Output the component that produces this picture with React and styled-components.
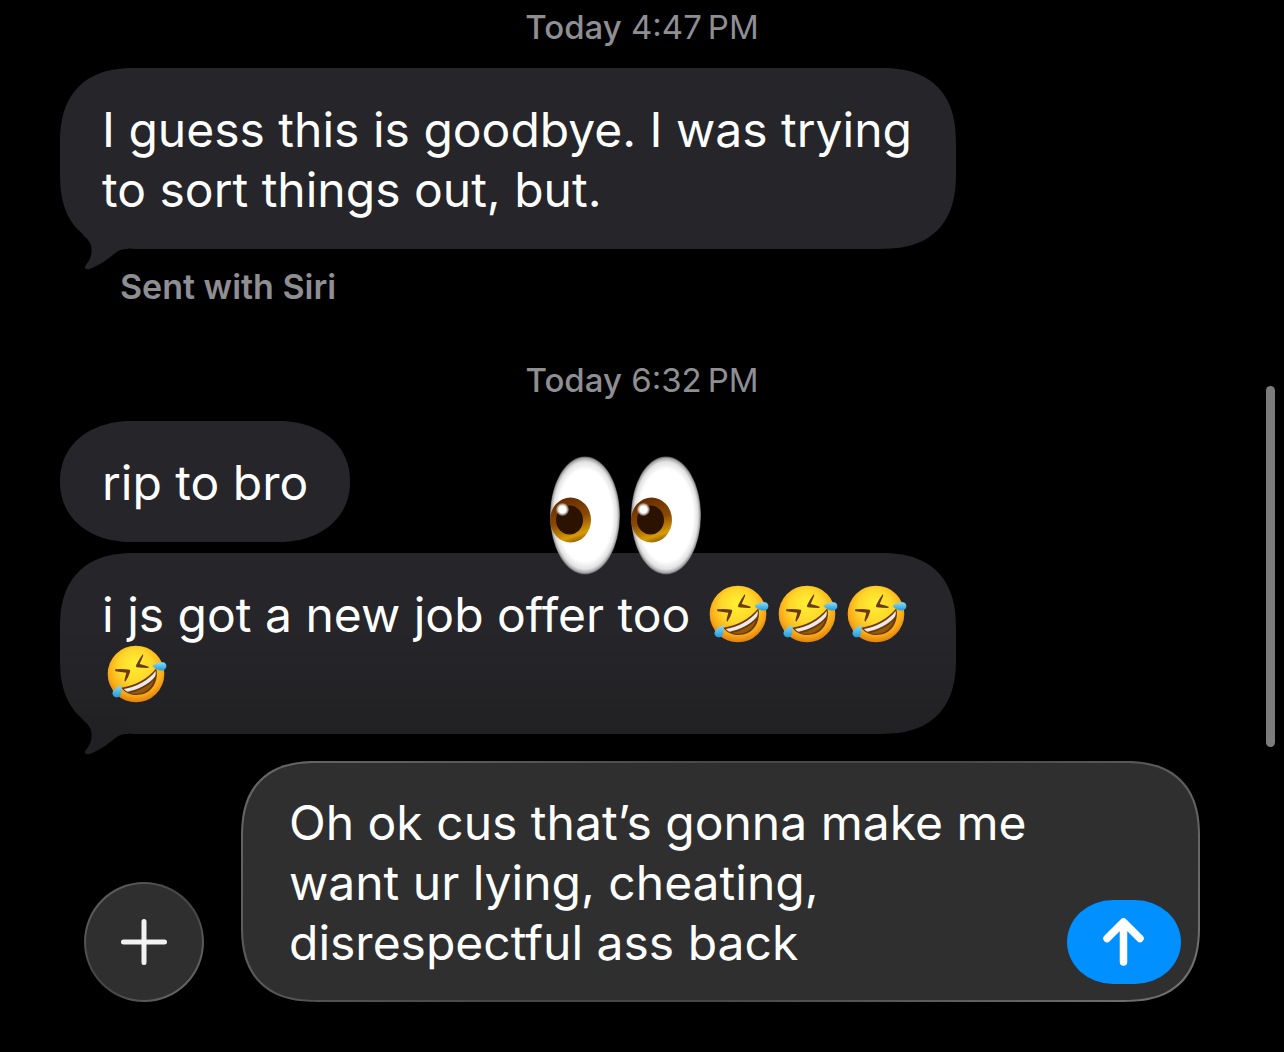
import React, { useState } from "react";
import styled, { createGlobalStyle } from "styled-components";

const GlobalStyle = createGlobalStyle`
  * {
    box-sizing: border-box;
  }
  body {
    margin: 0;
    background: #000;
    font-family: Inter, "Noto Sans", sans-serif;
  }
`;

const Screen = styled.div`
  position: relative;
  min-height: 100vh;
  display: flex;
  flex-direction: column;
  justify-content: space-between;
  background: #000;
  overflow: hidden;
`;

const Thread = styled.main`
  display: flex;
  flex-direction: column;
  padding: 7px 60px 0;
`;

const Timestamp = styled.time`
  font-size: 33px;
  line-height: 40px;
  color: #8e8e93;
  text-align: center;
  margin-bottom: 21px;
  b {
    font-weight: 500;
  }
`;

const Group = styled.section`
  display: flex;
  flex-direction: column;
  align-items: flex-start;
  gap: 11px;
`;

const Bubble = styled.p`
  position: relative;
  margin: 0;
  max-width: 77%;
  padding: 32px 42px 29px;
  font-size: 48px;
  line-height: 60px;
  color: #fff;
  background: ${(props) => (props.$faded ? "linear-gradient(#262529 40%, #212124)" : "#262529")};
  border-radius: 60px;
  @supports (corner-shape: squircle) {
    border-radius: 76px;
    corner-shape: superellipse(1.3);
  }
`;

const ShortBubble = styled(Bubble)`
  border-radius: 68px / 60px;
  @supports (corner-shape: squircle) {
    border-radius: 72px / 60px;
    corner-shape: superellipse(1.1);
  }
`;

const Tail = styled.svg`
  position: absolute;
  left: 0;
  bottom: -21px;
  width: 70px;
  height: 41px;
  fill: ${(props) => props.$color};
`;

const Sticker = styled.svg`
  position: absolute;
  left: 488px;
  top: -97px;
  width: 154px;
  height: 120px;
`;

const Emoji = styled.svg`
  display: inline-block;
  width: 69px;
  height: 60px;
  vertical-align: top;
`;

const Note = styled.small`
  margin: 18px 0 53px 60px;
  font-size: 34px;
  line-height: 40px;
  font-weight: 600;
  color: #8e8e93;
`;

const Composer = styled.form`
  display: flex;
  align-items: flex-end;
  gap: 37px;
  padding: 0 84px 50px;
`;

const glass = `
  border: 2px solid transparent;
  background:
    linear-gradient(#2f2f2f, #2f2f2f) padding-box,
    linear-gradient(135deg, #686868, #484848 40%, #484848 60%, #747474) border-box;
`;

const PlusButton = styled.button`
  ${glass}
  flex: none;
  display: flex;
  align-items: center;
  justify-content: center;
  width: 120px;
  height: 120px;
  padding: 0;
  border-radius: 50%;
  cursor: pointer;
`;

const InputBox = styled.div`
  ${glass}
  flex: 1;
  display: flex;
  align-items: flex-end;
  gap: 20px;
  padding: 0 17px 0 46px;
  border-radius: 60px;
  @supports (corner-shape: squircle) {
    border-radius: 76px;
    corner-shape: superellipse(1.3);
  }
`;

const MessageInput = styled.textarea`
  flex: 1;
  min-width: 0;
  height: 237px;
  padding: 30px 0 27px;
  border: none;
  outline: none;
  resize: none;
  overflow: hidden;
  background: transparent;
  color: #fff;
  font: 400 48px / 60px Inter, "Noto Sans", sans-serif;
`;

const SendButton = styled.button`
  flex: none;
  display: flex;
  align-items: center;
  justify-content: center;
  width: 114px;
  height: 84px;
  margin-bottom: 16px;
  padding: 0;
  border: none;
  border-radius: 46px / 42px;
  background: #0090ff;
  cursor: pointer;
`;

const ScrollThumb = styled.div`
  position: absolute;
  right: 9px;
  top: 386px;
  width: 9px;
  height: 361px;
  border-radius: 5px;
  background: #7c7c7c;
`;

const BubbleTail = ({ color }) => (
  <Tail $color={color} viewBox="0 0 70 41" aria-hidden="true">
    <path d="M14 -6L24 7C30 12 32 16 31.500 23C31 30 28 33 25.500 36.500C24 39.500 26 41 29.500 40C40 36 47 31 54 25C59 21 62 20 68 20V0Z" />
  </Tail>
);

const Rofl = () => (
  <Emoji viewBox="0 3 207 180" role="img" aria-label="rolling on the floor laughing">
    <circle cx="102" cy="90" r="85" fill="url(#face)" />
    <g fill="#6b3a04">
      <path d="M40 76Q62 74 83 77Q86 79 84 84Q80 99 70 113Q66 111 68 105L73 86Q56 85 41 82Q37 78 40 76Z" />
      <path d="M122 31Q125 33 123 37L113 60Q128 63 140 68Q142 71 137 72Q120 72 104 70Q100 68 103 62Q111 46 122 31Z" />
      <path d="M58 131C94 127 139 105 163 73C170 103 157 136 130 148C103 159 73 152 58 131Z" />
    </g>
    <path d="M66 135C100 130 142 108 161 81C162 88 161 94 158 99C140 121 105 138 77 143C72 141 69 139 66 135Z" fill="#ece9ee" />
    <path d="M83 147C110 142 138 128 155 109C150 126 141 137 128 143C113 149 97 152 83 147Z" fill="#965a0b" />
    <path d="M151 66C160 58 174 53 184 55C196 58 196 75 184 79C172 82 160 74 151 66Z" fill="url(#tear)" />
    <path d="M58 123C59 135 60 151 52 158C42 164 29 156 32 144C35 134 48 128 58 123Z" fill="url(#tear)" />
  </Emoji>
);

const Eye = ({ x }) => (
  <g transform={`translate(${x} 0)`}>
    <ellipse cx="37" cy="59.500" rx="35" ry="59" fill="url(#eyeball)" />
    <ellipse cx="22.500" cy="64" rx="20.500" ry="22.500" fill="url(#iris)" />
    <ellipse cx="21.500" cy="64" rx="13.500" ry="14.500" fill="#2c1200" />
    <circle cx="14.500" cy="53.500" r="6.500" fill="url(#shine)" />
  </g>
);

const EyesSticker = () => (
  <Sticker viewBox="0 0 154 120" role="img" aria-label="eyes">
    <Eye x={0} />
    <Eye x={81} />
  </Sticker>
);

const Gradients = () => (
  <svg width="0" height="0" style={{ position: "absolute" }} aria-hidden="true">
    <defs>
      <radialGradient id="face" cx="0.5" cy="0.42" r="0.6" fx="0.48" fy="0.3">
        <stop offset="0" stopColor="#fff033" />
        <stop offset="0.5" stopColor="#fed62a" />
        <stop offset="0.8" stopColor="#f9ab18" />
        <stop offset="1" stopColor="#dd780c" />
      </radialGradient>
      <linearGradient id="tear" x1="0" y1="0" x2="0" y2="1">
        <stop offset="0" stopColor="#8adcfa" />
        <stop offset="1" stopColor="#229bd8" />
      </linearGradient>
      <radialGradient id="eyeball">
        <stop offset="0.78" stopColor="#fff" />
        <stop offset="0.91" stopColor="#e2e2e2" />
        <stop offset="0.97" stopColor="#a6a6a6" />
        <stop offset="1" stopColor="#555" />
      </radialGradient>
      <linearGradient id="iris" x1="0.35" y1="0" x2="0.65" y2="1">
        <stop offset="0" stopColor="#622c06" />
        <stop offset="0.5" stopColor="#8a4a05" />
        <stop offset="0.85" stopColor="#d79c04" />
        <stop offset="1" stopColor="#8d5a08" />
      </linearGradient>
      <radialGradient id="shine">
        <stop offset="0.55" stopColor="#fff" />
        <stop offset="1" stopColor="#fff" stopOpacity="0.2" />
      </radialGradient>
    </defs>
  </svg>
);

const App = function () {
  const [draft, setDraft] = useState(
    "Oh ok cus that’s gonna make me want ur lying, cheating, disrespectful ass back"
  );

  return (
    <Screen>
      <GlobalStyle />
      <Gradients />
      <Thread>
        <Timestamp>
          <b>Today</b> 4:47&thinsp;PM
        </Timestamp>
        <Group>
          <Bubble>
            I guess this is goodbye. I was trying to sort things out, but.
            <BubbleTail color="#262529" />
          </Bubble>
        </Group>
        <Note>Sent with Siri</Note>
        <Timestamp>
          <b>Today</b> 6:32&thinsp;PM
        </Timestamp>
        <Group>
          <ShortBubble>rip to bro</ShortBubble>
          <Bubble $faded>
            i js got a new job offer too <Rofl />
            <Rofl />
            <Rofl />
            <Rofl />
            <BubbleTail color="#212124" />
            <EyesSticker />
          </Bubble>
        </Group>
      </Thread>
      <Composer onSubmit={(e) => e.preventDefault()}>
        <PlusButton type="button" aria-label="Add">
          <svg width="48" height="48" viewBox="0 0 48 48" stroke="#f2f2f2" strokeWidth="5" strokeLinecap="round">
            <path d="M24 3.500V44.500M3.500 24H44.500" />
          </svg>
        </PlusButton>
        <InputBox>
          <MessageInput
            aria-label="Message"
            spellCheck={false}
            value={draft}
            onChange={(e) => setDraft(e.target.value)}
          />
          <SendButton type="submit" aria-label="Send">
            <svg
              width="42"
              height="48"
              viewBox="0 0 42 48"
              fill="none"
              stroke="#fff"
              strokeWidth="7.500"
              strokeLinecap="round"
              strokeLinejoin="round"
            >
              <path d="M20.500 44V5M4 20.500L20.500 4L37 20.500" />
            </svg>
          </SendButton>
        </InputBox>
      </Composer>
      <ScrollThumb />
    </Screen>
  );
};

export default App;
